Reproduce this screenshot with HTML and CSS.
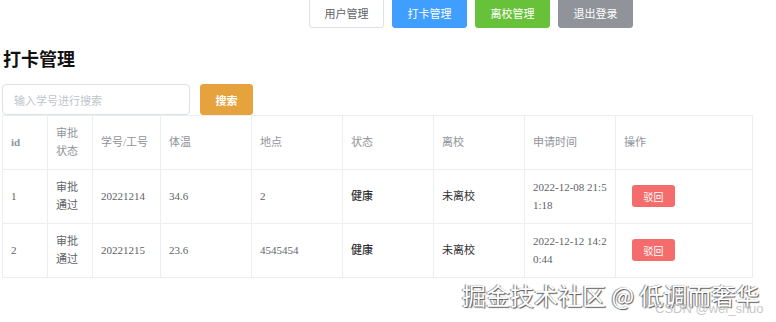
FILE: index.html
```html
<!DOCTYPE html>
<html lang="zh-CN">
<head>
  <meta charset="UTF-8" />
  <title>打卡管理</title>
  <link rel="stylesheet" href="styles.css">
</head>
<body>
  <!-- 顶部导航 -->
  <div class="nav">
    <button class="btn btn-default">用户管理</button>
    <button class="btn btn-primary">打卡管理</button>
    <button class="btn btn-success">离校管理</button>
    <button class="btn btn-info">退出登录</button>
  </div>

  <h2 class="page-title">打卡管理</h2>

  <!-- 搜索 -->
  <div class="search-bar">
    <input class="search-input" type="text" placeholder="输入学号进行搜索" />
    <button class="btn btn-warning search-btn">搜索</button>
  </div>

  <!-- 表格 -->
  <table class="data-table">
    <colgroup>
      <col style="width:45px">
      <col style="width:45px">
      <col style="width:68px">
      <col style="width:91px">
      <col style="width:91px">
      <col style="width:91px">
      <col style="width:91px">
      <col style="width:91px">
      <col style="width:137px">
    </colgroup>
    <thead>
      <tr>
        <th class="id-head">id</th>
        <th>审批状态</th>
        <th>学号/工号</th>
        <th>体温</th>
        <th>地点</th>
        <th>状态</th>
        <th>离校</th>
        <th>申请时间</th>
        <th>操作</th>
      </tr>
    </thead>
    <tbody>
      <tr>
        <td>1</td>
        <td>审批通过</td>
        <td>20221214</td>
        <td>34.6</td>
        <td>2</td>
        <td class="strong">健康</td>
        <td class="dark">未离校</td>
        <td class="time">2022-12-08 21:51:18</td>
        <td class="ops"><button class="btn-reject">驳回</button></td>
      </tr>
      <tr>
        <td>2</td>
        <td>审批通过</td>
        <td>20221215</td>
        <td>23.6</td>
        <td>4545454</td>
        <td class="strong">健康</td>
        <td class="dark">未离校</td>
        <td class="time">2022-12-12 14:20:44</td>
        <td class="ops"><button class="btn-reject">驳回</button></td>
      </tr>
    </tbody>
  </table>

  <!-- 水印 -->
  <div class="watermark">掘金技术社区 @ 低调而奢华</div>
  <div class="watermark-sub">CSDN @wei_shuo</div>
</body>
</html>
```

FILE: styles.css
```css
/* 基础 */
html, body {
  margin: 0;
  padding: 0;
  background: #fff;
  font-family: "Liberation Serif", "Noto Sans CJK SC", serif;
  color: #606266;
}
* {
  box-sizing: border-box;
}
body {
  position: relative;
  width: 776px;
  height: 322px;
  overflow: hidden;
  padding: 0 2px;
}

/* 按钮 */
.btn {
  font-family: "Noto Sans CJK SC", sans-serif;
  font-size: 11px;
  border: 1px solid transparent;
  border-radius: 3px;
  color: #fff;
  cursor: pointer;
  padding: 0;
}
.btn-default {
  background: #fff;
  border-color: #dcdfe6;
  color: #606266;
}
.btn-primary { background: #409eff; border-color: #409eff; }
.btn-success { background: #67c23a; border-color: #67c23a; }
.btn-info { background: #909399; border-color: #909399; }
.btn-warning { background: #e6a23c; border-color: #e6a23c; }

/* 导航 */
.nav {
  display: flex;
  gap: 8px;
  padding-left: 307px;
}
.nav .btn {
  width: 75px;
  height: 30px;
  margin-top: -2px;
}

/* 标题 */
.page-title {
  margin: 18px 0 0 1px;
  font-family: "Noto Sans CJK SC", sans-serif;
  font-size: 18px;
  font-weight: 700;
  color: #111;
  line-height: 24px;
}

/* 搜索 */
.search-bar {
  display: flex;
  gap: 10px;
  margin-top: 14px;
}
.search-input {
  width: 188px;
  height: 31px;
  border: 1px solid #dcdfe6;
  border-radius: 4px;
  padding: 0 11px;
  font-family: "Noto Sans CJK SC", sans-serif;
  font-size: 11px;
  outline: none;
}
.search-input::placeholder {
  color: #c0c4cc;
}
.search-btn {
  width: 53px;
  height: 31px;
  font-weight: 700;
}

/* 表格 */
.data-table {
  table-layout: fixed;
  border-collapse: collapse;
  width: 750px;
  font-size: 11px;
  line-height: 18px;
}
.data-table th,
.data-table td {
  border: 1px solid #ebeef5;
  padding: 8px 6px 9px 8px;
  text-align: left;
  vertical-align: middle;
  word-break: break-all;
}
.data-table th {
  color: #909399;
  font-weight: 400;
}
.data-table th.id-head {
  font-weight: 700;
}
.data-table td.strong {
  color: #303133;
  font-weight: 500;
}
.data-table td.dark {
  color: #303133;
}
.data-table td.ops {
  padding-left: 16px;
}

.btn-reject {
  width: 43px;
  height: 22px;
  border: none;
  border-radius: 3px;
  background: #f56c6c;
  color: #fff;
  font-family: "Noto Sans CJK SC", sans-serif;
  font-size: 10px;
  padding: 0;
}

/* 水印 */
.watermark {
  position: absolute;
  left: 462px;
  top: 279px;
  font-family: "Noto Sans CJK SC", sans-serif;
  font-size: 24px;
  line-height: 32px;
  color: #fff;
  text-shadow: 1px 1px 1px #555, -1px 0 1px #777;
  white-space: nowrap;
}
.watermark-sub {
  position: absolute;
  left: 655px;
  top: 301px;
  font-family: "Liberation Sans", sans-serif;
  font-size: 13px;
  color: #c8c8c8;
  white-space: nowrap;
}
```
